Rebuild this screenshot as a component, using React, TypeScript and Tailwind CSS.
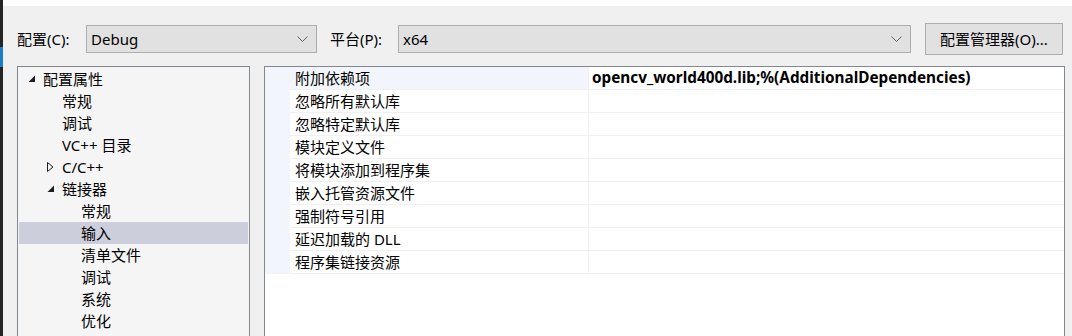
import React from "react";

const FONT = { fontFamily: "'Noto Sans','Noto Sans CJK SC',sans-serif" };

function Chevron() {
  return (
    <svg width="11" height="7" viewBox="0 0 11 7" className="shrink-0">
      <polyline points="0.5,0.5 5.5,5.5 10.5,0.5" fill="none" stroke="#606060" strokeWidth="1" />
    </svg>
  );
}

function Combo({ value, width }: { value: string; width: string }) {
  return (
    <div className={`${width} h-[28px] shrink-0 bg-[#e1e1e1] border border-[#adadad] flex items-center pl-[4px] pr-[8px]`}>
      <span className="flex-1 text-[15px] leading-none text-black">{value}</span>
      <Chevron />
    </div>
  );
}

function Expanded() {
  return (
    <svg width="8" height="8" viewBox="0 0 8 8" className="shrink-0">
      <polygon points="7,0.5 7,7 0.5,7" fill="#1e1e1e" />
    </svg>
  );
}

function Collapsed() {
  return (
    <svg width="7" height="10" viewBox="0 0 7 10" className="shrink-0">
      <polygon points="0.5,0.5 6,5 0.5,9.5" fill="none" stroke="#1e1e1e" strokeWidth="1" />
    </svg>
  );
}

type TreeItem = { label: string; level: number; icon?: "exp" | "col"; selected?: boolean };

const tree: TreeItem[] = [
  { label: "配置属性", level: 0, icon: "exp" },
  { label: "常规", level: 1 },
  { label: "调试", level: 1 },
  { label: "VC++ 目录", level: 1 },
  { label: "C/C++", level: 1, icon: "col" },
  { label: "链接器", level: 1, icon: "exp" },
  { label: "常规", level: 2 },
  { label: "输入", level: 2, selected: true },
  { label: "清单文件", level: 2 },
  { label: "调试", level: 2 },
  { label: "系统", level: 2 },
  { label: "优化", level: 2 },
];

const props = [
  "附加依赖项",
  "忽略所有默认库",
  "忽略特定默认库",
  "模块定义文件",
  "将模块添加到程序集",
  "嵌入托管资源文件",
  "强制符号引用",
  "延迟加载的 DLL",
  "程序集链接资源",
];

export default function App() {
  return (
    <div className="w-[1072px] h-[336px] overflow-hidden flex bg-[#f0f0f0] text-black" style={FONT}>
      <div className="w-[3px] h-full shrink-0 bg-[#252526] flex flex-col">
        <div className="h-[47px] shrink-0" />
        <div className="h-[20px] shrink-0 bg-[#1c7dc9]" />
      </div>
      <div className="flex-1 flex flex-col min-h-0">
        <div className="h-[6px] shrink-0 bg-white" />
        <div className="flex items-center h-[32px] shrink-0 mt-[17px] pl-[14px]">
          <span className="w-[69px] shrink-0 text-[15px] leading-none">配置(C):</span>
          <Combo value="Debug" width="w-[231px]" />
          <span className="w-[68px] shrink-0 ml-[13px] text-[15px] leading-none">平台(P):</span>
          <Combo value="x64" width="w-[513px]" />
          <button className="ml-[14px] w-[138px] h-[32px] shrink-0 bg-[#e1e1e1] border border-[#adadad] text-[15px] leading-none flex items-center justify-center">
            配置管理器(O)...
          </button>
        </div>
        <div className="flex mt-[11px] pl-[14px] gap-[14px] flex-1 min-h-0">
          <div className="w-[233px] shrink-0 border-l border-t border-r border-[#828790] bg-[#f5f5f5] pt-[1px] px-[1px]">
            {tree.map((t, i) => (
              <div
                key={i}
                className={`h-[22px] flex items-center text-[15px] leading-none ${t.selected ? "bg-[#cccedb]" : ""}`}
              >
                <div
                  className={`flex items-center justify-start shrink-0 ${
                    t.level === 0 ? "w-[24px] pl-[9px]" : t.level === 1 ? "w-[43px] pl-[28px]" : "w-[62px]"
                  }`}
                >
                  {t.icon === "exp" && <Expanded />}
                  {t.icon === "col" && <Collapsed />}
                </div>
                <span>{t.label}</span>
              </div>
            ))}
          </div>
          <div className="w-[801px] shrink-0 border-l border-t border-r border-[#828790] bg-white">
            <div className="flex">
              <div className="w-[25px] h-[207px] bg-[#f2f5fb]" />
              <div className="flex-1 flex flex-col">
                {props.map((p, i) => (
                  <div key={i} className="h-[23px] flex border-b border-[#f0f0f0]">
                    <div
                      className={`w-[299px] pl-[5px] flex items-center text-[15px] leading-none border-r border-[#f0f0f0] ${
                        i === 0 ? "bg-[#f2f5fb]" : ""
                      }`}
                    >
                      {p}
                    </div>
                    <div className="flex-1 pl-[3px] flex items-center text-[15.3px] leading-none font-bold">
                      {i === 0 ? "opencv_world400d.lib;%(AdditionalDependencies)" : ""}
                    </div>
                  </div>
                ))}
              </div>
            </div>
          </div>
        </div>
      </div>
    </div>
  );
}
